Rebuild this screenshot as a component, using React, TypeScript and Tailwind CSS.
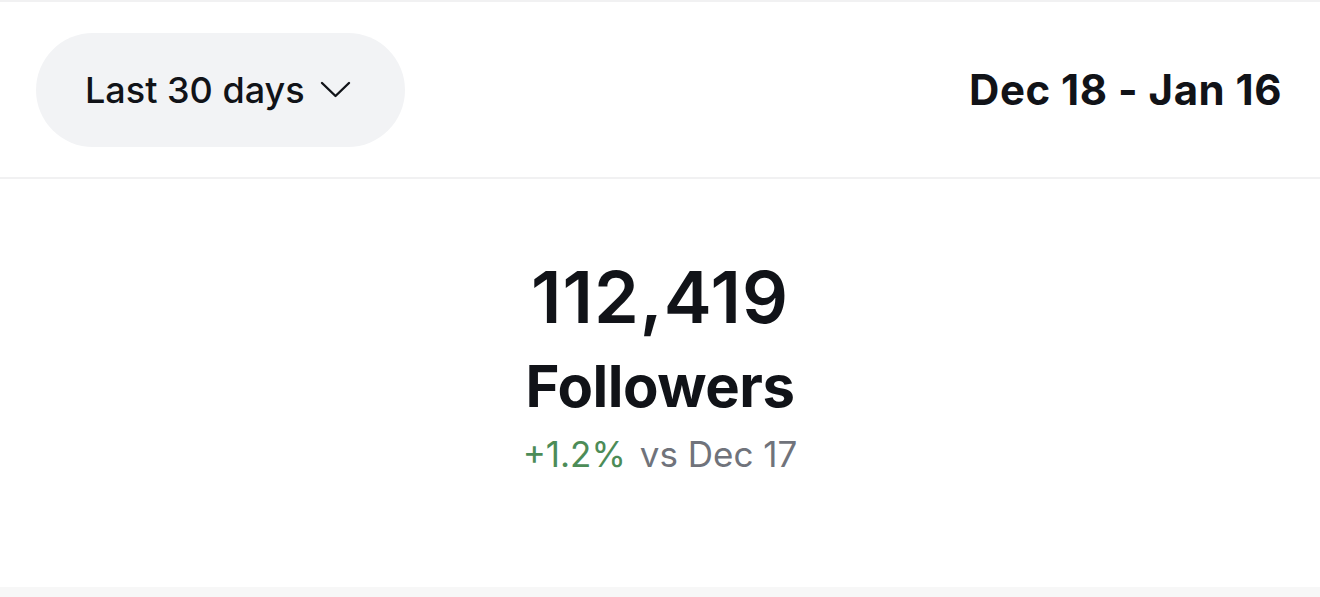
export default function App() {
  return (
    <div
      className="flex h-[597px] w-[1320px] flex-col bg-white text-[#111318]"
      style={{ fontFamily: "Inter, 'Noto Sans', sans-serif" }}
    >
      {/* Header */}
      <div className="flex h-[179px] items-center justify-between border-t-2 border-b-2 border-[#f1f1f2] pl-[36px] pr-[38px]">
        <button className="flex h-[114px] w-[369px] items-center gap-[15px] rounded-full bg-[#f2f3f5] pl-[49px] text-[36px] font-medium leading-none">
          Last 30 days
          <svg
            width="31"
            height="17"
            viewBox="0 0 31 17"
            fill="none"
            stroke="currentColor"
            strokeWidth="2.4"
            strokeLinecap="round"
            strokeLinejoin="round"
          >
            <path d="M2 2l13.5 13L29 2" />
          </svg>
        </button>
        <div className="text-[42px] font-bold leading-none tracking-[0.5px]">
          Dec 18 - Jan 16
        </div>
      </div>

      {/* Stat */}
      <div className="flex flex-1 flex-col items-center pt-[82px]">
        <div className="text-[72px] font-semibold leading-none tracking-[1px]">
          112,419
        </div>
        <div className="mt-[24px] text-[58px] font-bold leading-none tracking-[-0.5px]">
          Followers
        </div>
        <div className="mt-[22px] text-[35px] leading-none">
          <span className="text-[#4c8c57]">+1.2%</span>
          <span className="ml-[14px] text-[#70737b]">vs Dec 17</span>
        </div>
      </div>

      <div className="h-[10px] bg-[#f7f7f7]" />
    </div>
  );
}
